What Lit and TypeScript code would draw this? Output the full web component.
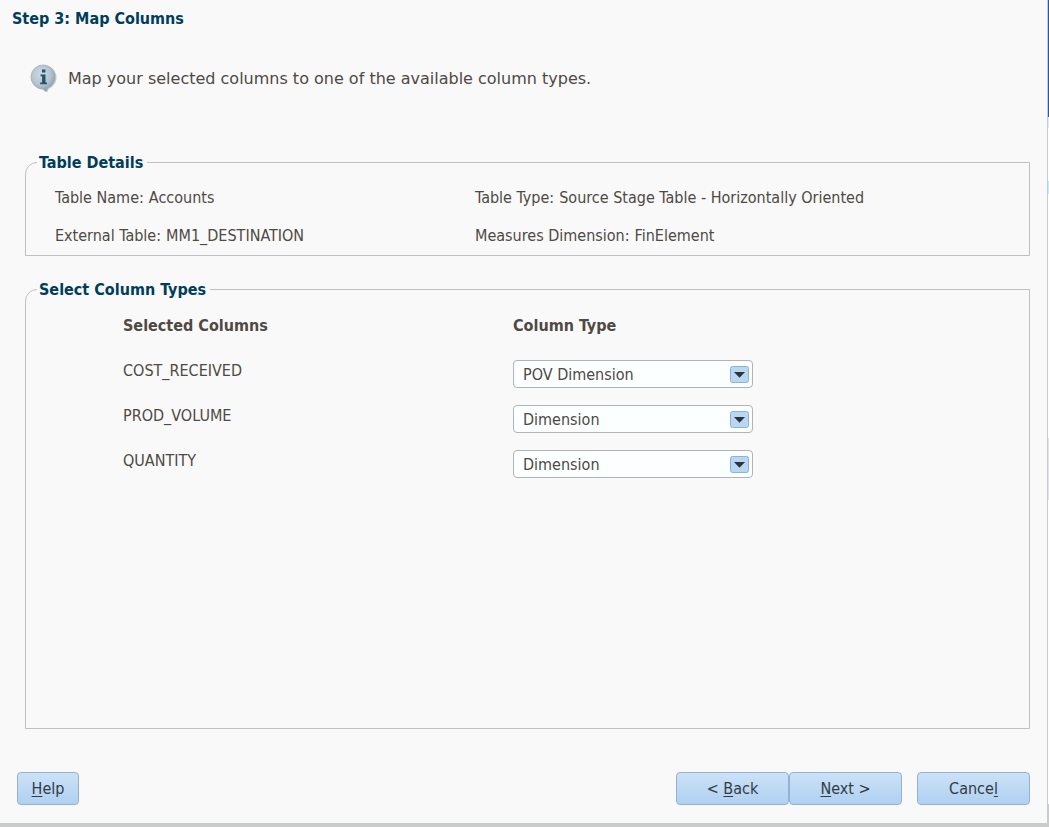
import { LitElement, html, css, svg } from "lit";
import { customElement, state } from "lit/decorators.js";

interface ColumnMapping {
  name: string;
  type: string;
}

const COLUMN_TYPES = ["POV Dimension", "Dimension", "Measure"];

const infoIcon = svg`
  <svg class="info-icon" viewBox="0 0 30 30" aria-hidden="true">
    <defs>
      <radialGradient id="bubble" cx="0.4" cy="0.35" r="0.7">
        <stop offset="0" stop-color="#cfdae2" />
        <stop offset="0.6" stop-color="#b3c2ce" />
        <stop offset="1" stop-color="#8293a1" />
      </radialGradient>
    </defs>
    <path d="M14.500 2.500a12 12 0 0 1 4.500 23.200L17 29.500l-4-3a12 12 0 0 1 1.500-24z" fill="#9aa6b0" opacity="0.5" />
    <path d="M13.500 2A12 12 0 0 1 18 25L16 28.500 12.500 26A12 12 0 0 1 13.500 2z" fill="url(#bubble)" stroke="#a3afb9" stroke-width="0.8" />
    <path d="M12 6.500h3.400v3H12zM10.500 11.500h5v8H17v1.800h-6.800v-1.800h1.900v-6.200h-1.600z" fill="#1f5470" />
  </svg>`;

const dropIcon = svg`
  <svg class="drop-icon" viewBox="0 0 19 17" aria-hidden="true">
    <rect x="0.5" y="0.5" width="18" height="16" rx="2" fill="#b9d7f3" stroke="#8fb2d3" />
    <path d="M4 6h11L9.500 11.700z" fill="#2e3338" />
  </svg>`;

@customElement("app-root")
export class AppRoot extends LitElement {
  @state() private mappings: ColumnMapping[] = [
    { name: "COST_RECEIVED", type: "POV Dimension" },
    { name: "PROD_VOLUME", type: "Dimension" },
    { name: "QUANTITY", type: "Dimension" },
  ];

  static styles = css`
    :host {
      display: block;
      color: #4f4943;
      font-family: "DejaVu Sans Condensed", "DejaVu Sans", sans-serif;
      font-size: 16px;
      line-height: 20px;
    }
    * {
      box-sizing: border-box;
    }
    .window {
      display: flex;
      min-height: 100vh;
      background: #f9f9f9;
      border-bottom: 4px solid #cacccc;
    }
    .dialog {
      flex: 1;
      min-width: 0;
      display: flex;
      flex-direction: column;
      padding: 9px 17px 18px 12px;
      border-right: 1px solid #c5ccd6;
    }
    .behind {
      width: 1px;
      background: linear-gradient(#1f5c9e 0 117px, #e6e9ec 117px 128px, #fff 128px 181px, #bff0ee 181px 194px, #fff 194px 438px, #e4e4da 438px 500px, #fff 500px 804px, #cacccc 804px);
    }
    .title,
    .legend {
      color: #003d5b;
      font-size: 16px;
      font-weight: bold;
      line-height: 20px;
    }
    .title {
      margin: 0;
    }
    .info {
      display: flex;
      align-items: center;
      gap: 8px;
      margin: 34px 0 0 18px;
      font-family: "DejaVu Sans", sans-serif;
    }
    .info p {
      margin: 0;
      padding-top: 2px;
    }
    .info-icon {
      flex: none;
      width: 30px;
      height: 30px;
    }
    .group {
      min-width: 0;
      margin: 0 0 0 13px;
      padding: 0;
      border: 1px solid #c0c0c4;
      border-top-left-radius: 12px;
    }
    .legend {
      margin-left: 11px;
      padding: 2px 4px 0 2px;
    }
    .details {
      margin-top: 58px;
    }
    .detail-grid {
      display: grid;
      grid-template-columns: 420px 1fr;
      row-gap: 18px;
      margin: 0;
      padding: 15px 0 9px 29px;
    }
    .detail-grid div {
      display: flex;
      gap: 5px;
    }
    dt,
    dd {
      margin: 0;
    }
    .types {
      flex: 1;
      margin-top: 22px;
    }
    .map {
      margin: 16px 0 0 97px;
      border-collapse: collapse;
    }
    .map th {
      padding: 0 0 16px;
      text-align: left;
      font-weight: bold;
    }
    .map th:first-child {
      width: 390px;
    }
    .map td {
      height: 45px;
      padding: 8px 0 0;
      vertical-align: top;
    }
    .map td:first-child {
      padding-top: 9px;
    }
    .picker {
      position: relative;
      width: 240px;
    }
    .select {
      display: block;
      width: 100%;
      height: 28px;
      padding: 2px 30px 0 9px;
      appearance: none;
      border: 1px solid #b0b4b6;
      border-radius: 4px;
      background: #fbffff;
      color: inherit;
      font: inherit;
    }
    .drop-icon {
      position: absolute;
      top: 6px;
      right: 4px;
      width: 19px;
      height: 17px;
      pointer-events: none;
    }
    .actions {
      display: flex;
      margin: 43px 0 0 5px;
    }
    .button {
      width: 113px;
      height: 33px;
      padding: 0;
      border: 1px solid #93b2d1;
      border-radius: 4px;
      background: linear-gradient(#cce1f7, #afd1f1);
      color: #333b44;
      font: inherit;
    }
    .help {
      width: 62px;
      margin-right: auto;
    }
    .cancel {
      margin-left: 15px;
    }
    .key {
      text-decoration: underline;
      text-underline-offset: 2px;
    }
  `;

  private setType(index: number, event: Event) {
    const type = (event.target as HTMLSelectElement).value;
    this.mappings = this.mappings.map((m, i) => (i === index ? { ...m, type } : m));
  }

  render() {
    return html`
      <div class="window">
        <main class="dialog">
          <h1 class="title">Step 3: Map Columns</h1>
          <div class="info">
            ${infoIcon}
            <p>Map your selected columns to one of the available column types.</p>
          </div>

          <fieldset class="group details">
            <legend class="legend">Table Details</legend>
            <dl class="detail-grid">
              <div><dt>Table Name:</dt><dd>Accounts</dd></div>
              <div><dt>Table Type:</dt><dd>Source Stage Table - Horizontally Oriented</dd></div>
              <div><dt>External Table:</dt><dd>MM1_DESTINATION</dd></div>
              <div><dt>Measures Dimension:</dt><dd>FinElement</dd></div>
            </dl>
          </fieldset>

          <fieldset class="group types">
            <legend class="legend">Select Column Types</legend>
            <table class="map">
              <thead>
                <tr><th scope="col">Selected Columns</th><th scope="col">Column Type</th></tr>
              </thead>
              <tbody>
                ${this.mappings.map(
                  (m, i) => html`
                    <tr>
                      <td><label for="type-${i}">${m.name}</label></td>
                      <td>
                        <div class="picker">
                          <select class="select" id="type-${i}" @change=${(e: Event) => this.setType(i, e)}>
                            ${COLUMN_TYPES.map((t) => html`<option ?selected=${t === m.type}>${t}</option>`)}
                          </select>
                          ${dropIcon}
                        </div>
                      </td>
                    </tr>
                  `
                )}
              </tbody>
            </table>
          </fieldset>

          <div class="actions">
            <button class="button help" type="button"><span class="key">H</span>elp</button>
            <button class="button" type="button">&lt; <span class="key">B</span>ack</button>
            <button class="button" type="button"><span class="key">N</span>ext &gt;</button>
            <button class="button cancel" type="button">Cance<span class="key">l</span></button>
          </div>
        </main>
        <div class="behind"></div>
      </div>
    `;
  }
}
